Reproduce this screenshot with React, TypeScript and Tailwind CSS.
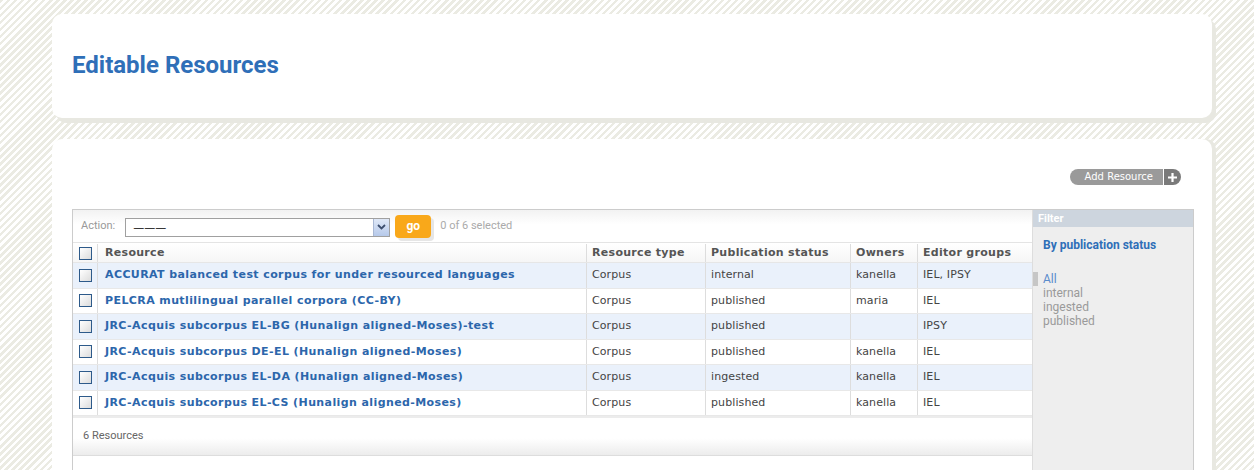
import React from "react";

const rows = [
  { name: "ACCURAT balanced test corpus for under resourced languages", type: "Corpus", status: "internal", owners: "kanella", groups: "IEL, IPSY" },
  { name: "PELCRA mutlilingual parallel corpora (CC-BY)", type: "Corpus", status: "published", owners: "maria", groups: "IEL" },
  { name: "JRC-Acquis subcorpus EL-BG (Hunalign aligned-Moses)-test", type: "Corpus", status: "published", owners: "", groups: "IPSY" },
  { name: "JRC-Acquis subcorpus DE-EL (Hunalign aligned-Moses)", type: "Corpus", status: "published", owners: "kanella", groups: "IEL" },
  { name: "JRC-Acquis subcorpus EL-DA (Hunalign aligned-Moses)", type: "Corpus", status: "ingested", owners: "kanella", groups: "IEL" },
  { name: "JRC-Acquis subcorpus EL-CS (Hunalign aligned-Moses)", type: "Corpus", status: "published", owners: "kanella", groups: "IEL" },
];

function Check() {
  return (
    <span className="block w-[13px] h-[13px] border border-[#2d5a8a] bg-[linear-gradient(135deg,#ffffff,#dcdcdc)]" />
  );
}

const dv = { fontFamily: '"DejaVu Sans", Verdana, sans-serif' };
const rb = { fontFamily: 'Roboto, "Liberation Sans", Arial, sans-serif' };

export default function App() {
  return (
    <div className="h-[470px] w-[1254px] overflow-hidden bg-[repeating-linear-gradient(135deg,#ebebe3_0px,#ebebe3_2.5px,#ffffff_2.5px,#ffffff_5px)]">
      <div className="pl-[52px] pt-[14px] w-[1212px]">
        {/* Card 1 */}
        <div className="h-[104px] bg-white rounded-[10px] shadow-[4px_5px_0_#e8e8e1] px-5 pt-[37px]">
          <h1 className="text-[24px] leading-[28px] font-bold text-[#2f6fb8]" style={rb}>
            Editable Resources
          </h1>
        </div>

        {/* Card 2 */}
        <div className="mt-[21px] h-[340px] bg-white rounded-t-[10px] shadow-[4px_0_0_#e8e8e1] pl-5 pr-[18px] pt-[30px]">
          <div className="flex justify-end pr-[13px]">
            <div className="flex h-[16px] items-stretch">
              <span className="flex items-center pl-[15px] pr-[10px] bg-[#9a9a9a] rounded-l-full text-white text-[10px] leading-none" style={dv}>
                Add Resource
              </span>
              <span className="w-px bg-white" />
              <span className="flex items-center justify-center w-[17px] bg-[#7a7a7a] rounded-r-full">
                <svg width="11" height="11" viewBox="0 0 11 11">
                  <path d="M5.5 1v9M1 5.5h9" stroke="#fff" strokeWidth="2.2" />
                </svg>
              </span>
            </div>
          </div>

          {/* changelist */}
          <div className="mt-[24px] flex border-t border-l border-r border-[#cccccc] h-[300px]">
            <div className="w-[959px] flex flex-col">
              {/* actions */}
              <div className="h-[33px] flex items-center pl-[8px] bg-[linear-gradient(to_bottom,#f2f2f2,#ffffff_45%)] border-b border-[#e4e4e4]">
                <span className="text-[11px] text-[#999]" style={rb}>Action:</span>
                <div className="ml-[10px] mt-[2px] w-[265px] h-[19px] border border-[#a0a0a0] bg-white flex items-center justify-between">
                  <span className="ml-[7px] text-[11px] leading-none text-black" style={dv}>———</span>
                  <span className="w-[16px] h-[17px] bg-[linear-gradient(to_bottom,#dfe8f7,#b6c9ea)] border-l border-[#a9b8d4] flex items-center justify-center">
                    <svg width="9" height="6" viewBox="0 0 9 6">
                      <path d="M1 1l3.5 3.5L8 1" stroke="#3c4e6e" strokeWidth="1.8" fill="none" />
                    </svg>
                  </span>
                </div>
                <span className="ml-[5px] w-[36px] h-[23px] rounded-[4px] bg-[#f9a81a] text-white font-bold text-[12px] flex items-center justify-center shadow-[3px_3px_0_#e6e6e6]" style={rb}>
                  go
                </span>
                <span className="ml-[9px] text-[11px] text-[#aaa]" style={rb}>0 of 6 selected</span>
              </div>
              {/* header */}
              <div className="h-[20px] pt-px flex text-[11px] font-bold text-[#555] tracking-[0.3px] border-b border-[#e6e6e6] bg-[linear-gradient(to_bottom,#ffffff,#f6f6f6)]" style={dv}>
                <div className="w-[25px] flex items-center justify-center border-r border-[#dddddd]"><Check /></div>
                <div className="w-[489px] pl-[7px] flex items-center border-r border-[#dddddd]">Resource</div>
                <div className="w-[119px] pl-[5px] flex items-center border-r border-[#dddddd]">Resource type</div>
                <div className="w-[145px] pl-[5px] flex items-center border-r border-[#dddddd]">Publication status</div>
                <div className="w-[67px] pl-[5px] flex items-center border-r border-[#dddddd]">Owners</div>
                <div className="flex-1 pl-[5px] flex items-center">Editor groups</div>
              </div>
              {rows.map((r, i) => (
                <div
                  key={i}
                  className={`h-[25.5px] flex text-[11px] text-[#444] tracking-[0.1px] border-b border-[#e8e8e8] ${i % 2 === 0 ? "bg-[#eaf1fb]" : "bg-white"}`}
                  style={dv}
                >
                  <div className="w-[25px] flex items-center justify-center border-r border-[#dddddd]"><Check /></div>
                  <div className="w-[489px] pl-[7px] flex items-center border-r border-[#dddddd] font-bold text-[#2c66ab] tracking-[0.4px]">{r.name}</div>
                  <div className="w-[119px] pl-[5px] flex items-center border-r border-[#dddddd]">{r.type}</div>
                  <div className="w-[145px] pl-[5px] flex items-center border-r border-[#dddddd]">{r.status}</div>
                  <div className="w-[67px] pl-[5px] flex items-center border-r border-[#dddddd]">{r.owners}</div>
                  <div className="flex-1 pl-[5px] flex items-center">{r.groups}</div>
                </div>
              ))}
              {/* footer */}
              <div className="border-t-2 border-[#ececec] h-[40px] bg-[linear-gradient(to_bottom,#ffffff_55%,#ececec)] border-b border-b-[#dddddd] flex items-center pl-[10px]">
                <span className="text-[11px] text-[#666]" style={rb}>6 Resources</span>
              </div>
              <div className="flex-1 bg-white" />
            </div>
            {/* filter */}
            <div className="flex-1 bg-[#eeeeee] border-l border-[#dddddd]" style={rb}>
              <div className="h-[17px] bg-[#cdd5de] text-white font-bold text-[11px] leading-[17px] pl-[5px]">Filter</div>
              <div className="pl-[10px] pt-[10px] text-[12px] font-bold text-[#2f6fb8] leading-[16px]">By publication status</div>
              <div className="mt-[19px] flex flex-col text-[12px] leading-[14px]">
                <div className="flex">
                  <span className="w-[5px] h-[14px] bg-[#c6c6c6] mr-[5px]" />
                  <span className="text-[#5a8ccc]">All</span>
                </div>
                <span className="pl-[10px] text-[#9a9a9a]">internal</span>
                <span className="pl-[10px] text-[#9a9a9a]">ingested</span>
                <span className="pl-[10px] text-[#9a9a9a]">published</span>
              </div>
            </div>
          </div>
        </div>
      </div>
    </div>
  );
}
